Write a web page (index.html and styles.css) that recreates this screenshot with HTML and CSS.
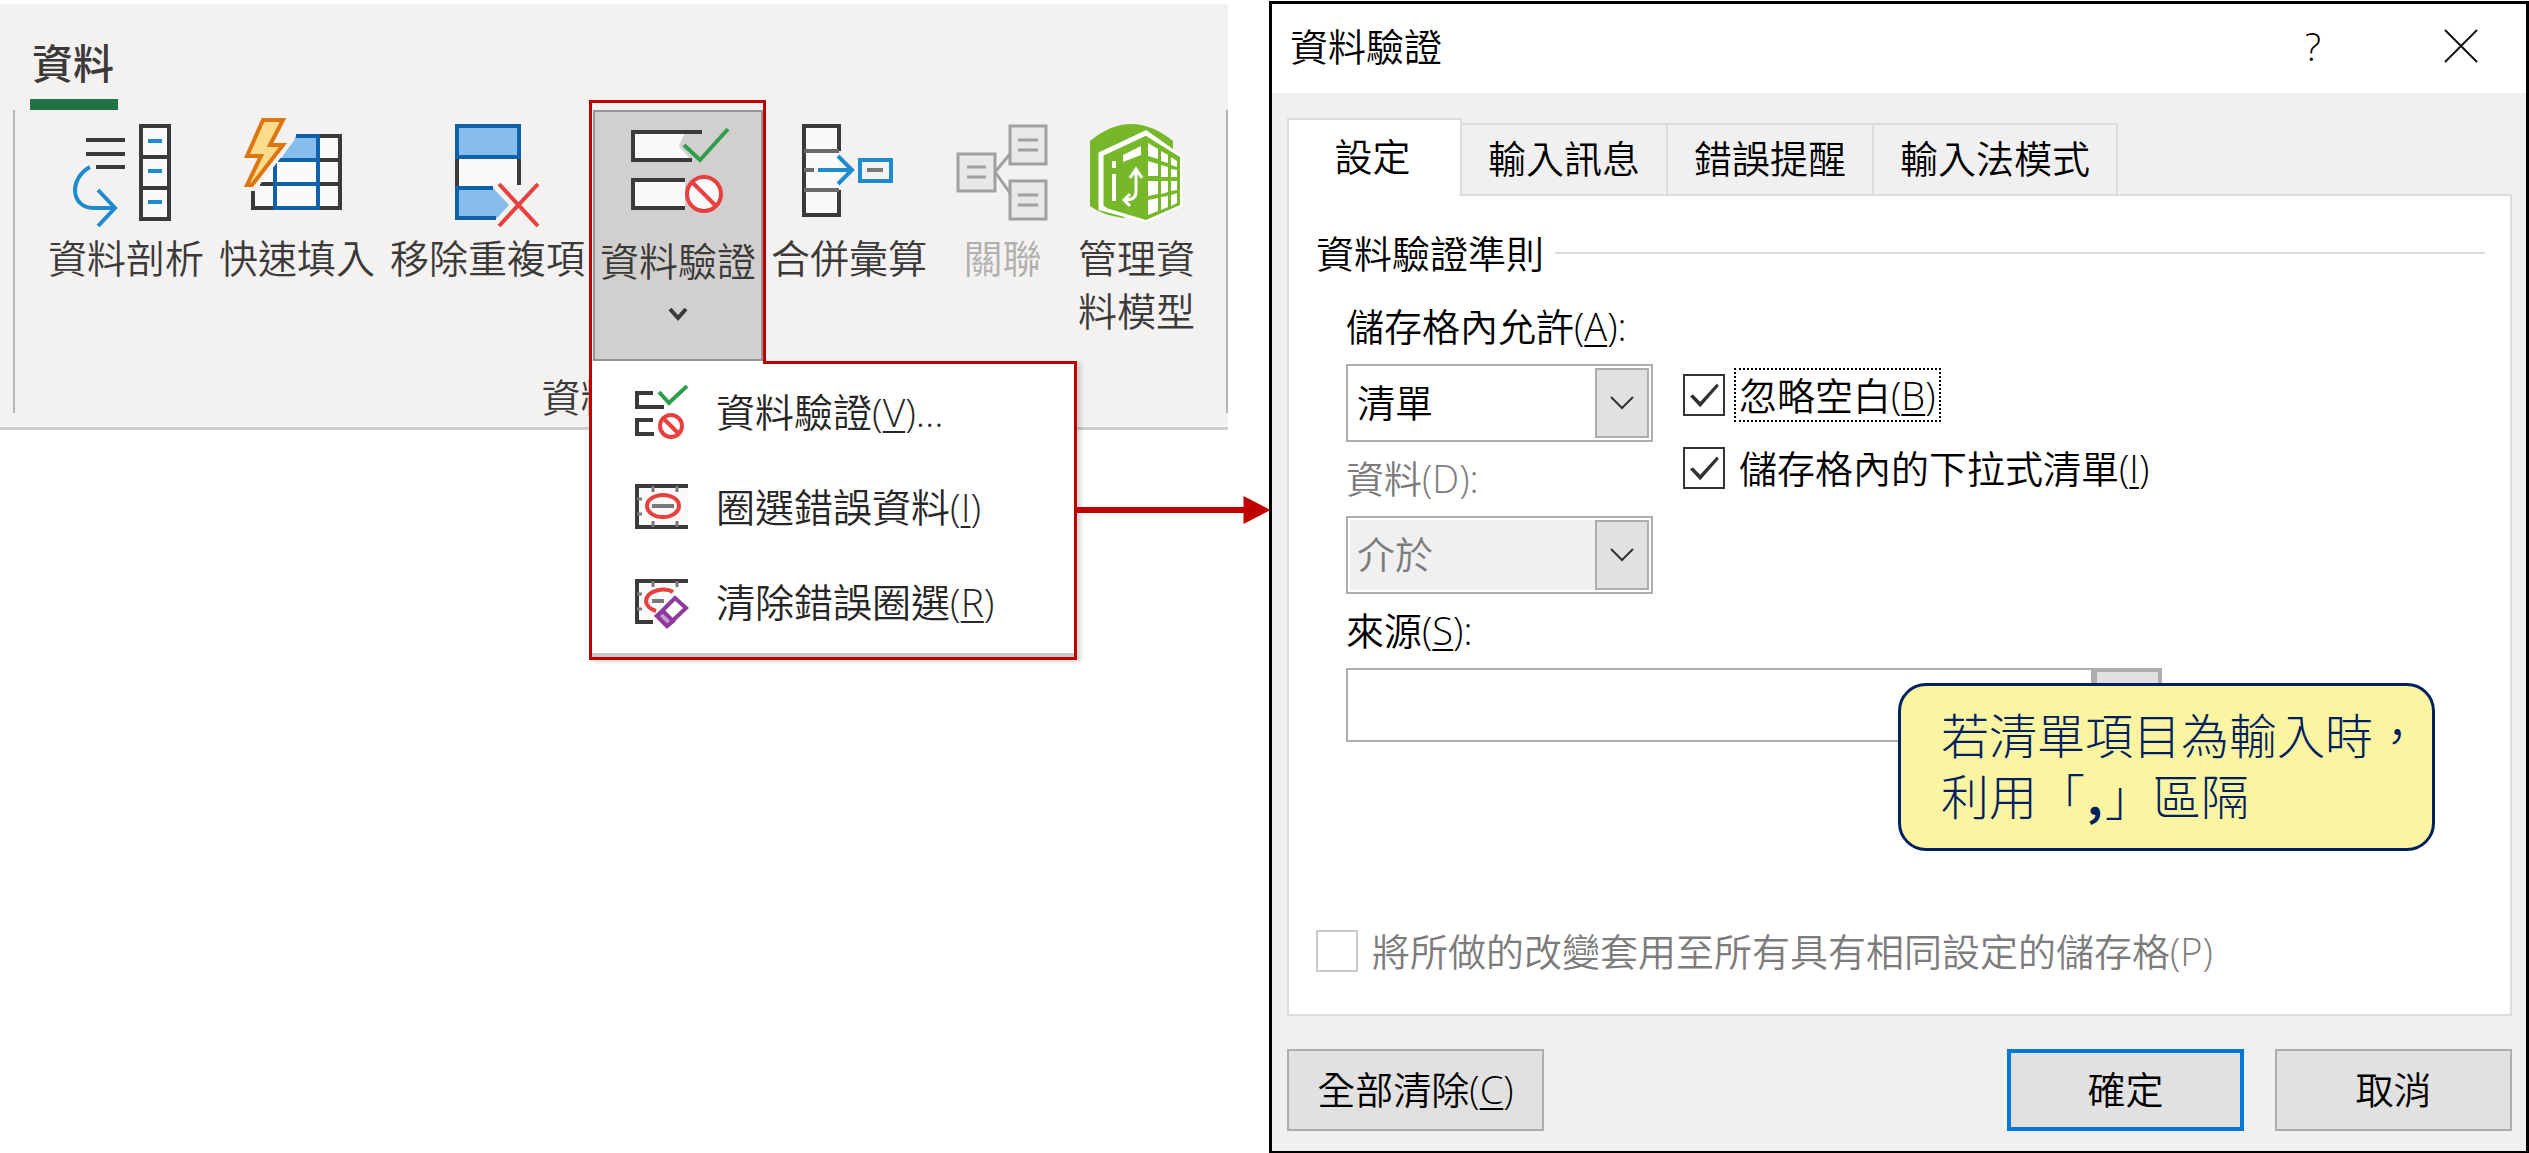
FILE: index.html
```html
<!DOCTYPE html>
<html lang="zh-Hant">
<head>
  <meta charset="UTF-8">
  <meta name="viewport" content="width=device-width, initial-scale=1.0">
  <title>資料驗證</title>
  <link rel="stylesheet" href="styles.css">
</head>
<body>
  <main class="page">
    <section class="ribbon">
      <button type="button" class="ribbon-tab">資料</button>

      <div class="group">
        <div class="tools">
          <button type="button" class="tool">
            <svg class="tool-icon" viewBox="0 0 110 110" fill="none" stroke="#3b3a39" stroke-width="4">
              <path d="M15 23H54M15 37H54M25 50H54"/>
              <path d="M70 9H98V102H70ZM70 40H98M70 71H98" fill="#fafafa"/>
              <g stroke="#1e8bcd">
                <path d="M77 24H91M77 54H91M77 85H91"/>
                <path d="M19 50C8 56 4 66 4 73C4 84 12 91 22 91H44M27 73L44 91L27 109"/>
              </g>
            </svg>
            <span>資料剖析</span>
          </button>

          <button type="button" class="tool">
            <svg class="tool-icon" viewBox="0 0 110 110" fill="none" stroke-width="4">
              <path d="M55 18H98V91H11V66L30 50Z" fill="#fafafa"/>
              <path d="M77 19H98V91H11V72M77 43H98M77 67H98M18 67H32" stroke="#3b3a39"/>
              <path d="M54 19H76V43H38Z" fill="#86bdea"/>
              <path d="M54 19H76V91H33V46M36 43H76M33 67H76" stroke="#0f61ab"/>
              <path d="M21 3H42L27 28H41L10 68H5L19 39H5Z" fill="#fbdc8c" stroke="#f3f2f1" stroke-width="12"/>
              <path d="M21 3H41L28 28H41L10 68H5L19 39H5Z" fill="#fbdc8c" stroke="#dd7510"/>
            </svg>
            <span>快速填入</span>
          </button>

          <button type="button" class="tool">
            <svg class="tool-icon" viewBox="0 0 110 110" fill="none" stroke-width="4">
              <path d="M24 40H86V69H24Z" fill="#fafafa"/>
              <path d="M24 40V71M86 40V68" stroke="#3b3a39"/>
              <path d="M24 9H86V40H24Z" fill="#86bdea" stroke="#0f61ab"/>
              <path d="M24 71H60L76 88L64 101H24Z" fill="#86bdea"/>
              <path d="M60 71H24V101H63" stroke="#0f61ab"/>
              <path d="M66 67L105 109M105 67L66 109" stroke="#f3f2f1" stroke-width="10"/>
              <path d="M66 67L105 109M105 67L66 109" stroke="#e8403f"/>
            </svg>
            <span>移除重複項</span>
          </button>

          <div class="dropdown">
            <button type="button" class="tool tool-open" aria-haspopup="true" aria-expanded="true">
              <svg class="tool-icon" viewBox="0 0 110 110" fill="none" stroke-width="4">
                <path d="M10 12H62L56 26L68 40H10ZM10 60H62V88H10Z" fill="#fafafa"/>
                <path d="M79 12H10V40H69M62 60H10V88H62" stroke="#3b3a39"/>
                <path d="M61 25L77 40L105 9" stroke="#2f9e4a"/>
                <circle cx="81" cy="74" r="17" fill="#fafafa" stroke="#e8403f"/>
                <path d="M69 62L93 86" stroke="#e8403f"/>
              </svg>
              <span>資料驗證</span>
              <svg class="chevron" viewBox="0 0 20 14" fill="none" stroke="#3b3a39" stroke-width="4">
                <path d="M2 2L10 11L18 2"/>
              </svg>
            </button>

            <div class="menu" role="menu">
              <button type="button" class="menu-item" role="menuitem">
                <svg class="menu-icon" viewBox="0 0 54 54" fill="none" stroke-width="4">
                  <path d="M18 8H2V22H29M18 35H2V49H19" stroke="#3b3a39"/>
                  <path d="M24 7L34 18L52 1" stroke="#2f9e4a"/>
                  <circle cx="36" cy="41" r="11" stroke="#e8403f"/>
                  <path d="M28 33L44 49" stroke="#e8403f"/>
                </svg>
                <span>資料驗證(<u>V</u>)...</span>
              </button>
              <button type="button" class="menu-item" role="menuitem">
                <svg class="menu-icon" viewBox="0 0 54 54" fill="none" stroke-width="4">
                  <path d="M53 6H2V47H53" fill="#fafafa" stroke="#3b3a39"/>
                  <path d="M18 6V12M42 6V12M18 41V47M42 41V47M2 19H7M2 34H7" stroke="#7a7978" stroke-width="3"/>
                  <ellipse cx="28" cy="26" rx="16" ry="11" fill="#fafafa" stroke="#e8403f"/>
                  <path d="M17 26H39" stroke="#7a7978"/>
                </svg>
                <span>圈選錯誤資料(<u>I</u>)</span>
              </button>
              <button type="button" class="menu-item" role="menuitem">
                <svg class="menu-icon" viewBox="0 0 54 54" fill="none" stroke-width="4">
                  <path d="M53 6H2V47H18" fill="#fafafa" stroke="#3b3a39"/>
                  <path d="M18 6V12M42 6V12M2 19H7M2 34H7" stroke="#7a7978" stroke-width="3"/>
                  <path d="M38 17C30 12 12 15 11 26C11 30 15 34 21 36" stroke="#e8403f"/>
                  <path d="M17 26H29" stroke="#7a7978"/>
                  <path d="M40 23L51 33L32 51L22 41Z" fill="#fff" stroke="#8e3a9d"/>
                  <path d="M28 36L38 46L32 51L22 41Z" fill="#c79bd0" stroke="#8e3a9d"/>
                </svg>
                <span>清除錯誤圈選(<u>R</u>)</span>
              </button>
              <svg class="arrow" viewBox="0 0 195 28" fill="#c00000">
                <path d="M0 11H168V0L195 14L168 28V17H0Z"/>
              </svg>
            </div>
          </div>

          <button type="button" class="tool">
            <svg class="tool-icon" viewBox="0 0 110 110" fill="none" stroke-width="4">
              <path d="M10 9H45V98H10Z" fill="#fafafa"/>
              <path d="M45 34V9H10V98H45V73" stroke="#3b3a39"/>
              <path d="M10 34H45M10 73H45M10 53H20" stroke="#6b6a69"/>
              <path d="M24 53H58M44 39L58 53L44 67M66 43H97V64H66Z" stroke="#1e8bcd"/>
              <path d="M73 53H89" stroke="#7a7978"/>
            </svg>
            <span>合併彙算</span>
          </button>

          <button type="button" class="tool tool-wide" disabled>
            <svg class="tool-icon" viewBox="0 0 110 110" fill="#e8e8e8" stroke="#a0a0a0" stroke-width="3">
              <path d="M47 55L62 37M47 55L62 76"/>
              <path d="M10 37H47V74H10ZM62 9H98V47H62ZM62 64H98V102H62Z"/>
              <path d="M19 50H38M19 60H38M70 23H90M70 33H90M70 78H90M70 88H90"/>
            </svg>
            <span>關聯</span>
          </button>

          <button type="button" class="tool">
            <svg class="tool-icon" viewBox="0 0 110 110" fill="#76b82a">
              <path d="M8 24Q49 -10 91 24V80L41 101Q20 98 8 89Z"/>
              <path d="M64 16L98 40V88L64 103L19 91V37Z" stroke="#fff" stroke-width="5"/>
              <path d="M64 19L98 40V88L64 103L24 91V39Z"/>
              <g fill="#fff">
                <path d="M66 26L76 32V42L66 39ZM79 34L86 38V46L79 44ZM89 40L95 44V50L89 48Z"/>
                <path d="M66 44L76 47V59H66ZM79 48L86 50V60H79ZM89 52L95 53V60H89Z"/>
                <path d="M66 64H76V77L66 79ZM79 64H86V75L79 77ZM89 64H95V73L89 74Z"/>
                <path d="M66 83L76 81V94L66 98ZM79 80L86 79V90L79 93ZM89 78L95 76V86L89 89Z"/>
                <path d="M41 38L59 29V38L41 45Z"/>
                <path d="M30 44H34V51H30ZM30 57H34V84H30Z"/>
              </g>
              <path d="M48 61L54 52L60 61M54 54V75Q54 83 43 83M48 77L42 83L48 89" fill="none" stroke="#fff" stroke-width="3"/>
            </svg>
            <span>管理資<br>料模型</span>
          </button>
        </div>
        <div class="group-name">資料工具</div>
      </div>
    </section>

    <form class="dialog">
      <header class="titlebar">
        <h1>資料驗證</h1>
        <button type="button" class="title-button" aria-label="說明">?</button>
        <button type="button" class="title-button" aria-label="關閉">
          <svg class="close" viewBox="0 0 34 34" fill="none" stroke="#111" stroke-width="2">
            <path d="M1 1L33 33M33 1L1 33"/>
          </svg>
        </button>
      </header>

      <div class="dialog-body">
        <div class="tabs" role="tablist">
          <button type="button" class="tab active" role="tab" aria-selected="true">設定</button>
          <button type="button" class="tab" role="tab">輸入訊息</button>
          <button type="button" class="tab" role="tab">錯誤提醒</button>
          <button type="button" class="tab" role="tab">輸入法模式</button>
        </div>

        <div class="panel">
          <h2 class="legend">資料驗證準則</h2>

          <div class="criteria">
            <div class="fields">
              <label for="allow">儲存格內允許(<u>A</u>):</label>
              <div class="combo">
                <select id="allow">
                  <option>清單</option>
                </select>
                <span class="combo-button">
                  <svg viewBox="0 0 24 16" fill="none" stroke="#333" stroke-width="2"><path d="M1 2L12 13L23 2"/></svg>
                </span>
              </div>
              <label for="data" class="off">資料(D):</label>
              <div class="combo">
                <select id="data" disabled>
                  <option>介於</option>
                </select>
                <span class="combo-button">
                  <svg viewBox="0 0 24 16" fill="none" stroke="#333" stroke-width="2"><path d="M1 2L12 13L23 2"/></svg>
                </span>
              </div>
            </div>

            <div class="checks">
              <div class="check">
                <input type="checkbox" id="blank" checked>
                <label for="blank" class="focused">忽略空白(<u>B</u>)</label>
              </div>
              <div class="check">
                <input type="checkbox" id="incell" checked>
                <label for="incell">儲存格內的下拉式清單(<u>I</u>)</label>
              </div>
            </div>
          </div>

          <div class="source">
            <label for="source">來源(<u>S</u>):</label>
            <div class="source-field">
              <input type="text" id="source">
              <button type="button" class="picker" aria-label="選取範圍"></button>
              <div class="callout">若清單項目為輸入時，<br>利用「<b>,</b>」區隔</div>
            </div>
          </div>

          <div class="check apply">
            <input type="checkbox" id="apply" disabled>
            <label for="apply">將所做的改變套用至所有具有相同設定的儲存格(P)</label>
          </div>
        </div>

        <footer class="buttons">
          <button type="button" class="btn btn-clear">全部清除(<u>C</u>)</button>
          <button type="submit" class="btn btn-ok">確定</button>
          <button type="button" class="btn">取消</button>
        </footer>
      </div>
    </form>
  </main>
</body>
</html>
```

FILE: styles.css
```css
* {
  box-sizing: border-box;
}
body {
  margin: 0;
  background: #fff;
  color: #000;
  font-family: "Open Sans", "Noto Sans CJK TC", sans-serif;
  font-size: 38px;
  font-weight: 350;
  line-height: 50px;
}
button, input, select {
  font: inherit;
  color: inherit;
  margin: 0;
  border-radius: 0;
}
h1, h2 {
  margin: 0;
  font-size: 38px;
  font-weight: inherit;
}
u {
  text-decoration-thickness: 2px;
  text-underline-offset: 4px;
}
.page {
  display: grid;
  grid-template-columns: 1228fr 1260fr;
  gap: 41px;
  align-items: start;
}

/* ribbon */
.ribbon {
  margin-top: 4px;
  padding: 23px 0 14px;
  background: #f3f2f1;
  border-bottom: 3px solid #cfcecd;
  color: #3b3a39;
}
.ribbon-tab {
  display: block;
  margin-left: 30px;
  padding: 0 4px 0 2px;
  border: 0;
  border-bottom: 11px solid #217346;
  background: none;
  font-size: 41px;
  font-weight: 500;
  line-height: 72px;
}
.group {
  margin-left: 13px;
  padding-left: 26px;
  border: solid #b5b4b3;
  border-width: 0 2px;
}
.tools {
  display: flex;
  align-items: flex-start;
  gap: 1px;
}
.tool {
  display: flex;
  flex-direction: column;
  align-items: center;
  padding: 7px 7px 0;
  border: 0;
  background: none;
  font-size: 39px;
  line-height: 53px;
  white-space: nowrap;
}
.tool:disabled {
  color: #b1b0af;
}
.tool-icon {
  width: 110px;
  height: 110px;
  margin-bottom: 4px;
}
.tool-wide {
  width: 135px;
}
.tool-open {
  width: 170px;
  height: 251px;
  padding: 8px 5px 0;
  border: 2px solid #979593;
  background: #d2d0ce;
}
.chevron {
  width: 20px;
  height: 14px;
  margin-top: 20px;
}
.group-name {
  margin: 20px 28px 0 0;
  font-size: 39px;
  line-height: 32px;
  text-align: center;
}

/* open menu with its red frame */
.dropdown {
  position: relative;
}
.dropdown::before {
  content: "";
  position: absolute;
  top: -10px;
  right: -3px;
  bottom: 0;
  left: -4px;
  border: 3px solid #c00000;
  border-bottom: 0;
  pointer-events: none;
}
.menu {
  position: absolute;
  top: 100%;
  left: -4px;
  width: 488px;
  padding: 3px 0 8px;
  background: #fff;
  border: 3px solid #c00000;
  border-top: 0;
  box-shadow: inset 0 -4px #c8c8c8, 4px 2px 4px rgba(0, 0, 0, 0.15);
  color: #262626;
}
.menu::before {
  content: "";
  position: absolute;
  top: 0;
  right: 0;
  left: 171px;
  height: 3px;
  background: #c00000;
}
.menu-item {
  display: flex;
  align-items: center;
  gap: 27px;
  width: 100%;
  height: 95px;
  padding: 0 43px;
  border: 0;
  background: none;
  font-size: 39px;
  white-space: nowrap;
}
.menu-icon {
  flex: none;
  width: 54px;
  height: 54px;
}
.arrow {
  position: absolute;
  top: 135px;
  left: 100%;
  z-index: 1;
  width: 198px;
  height: 28px;
}

/* dialog */
.dialog {
  margin-top: 1px;
  border: 3px solid #000;
  background: #f0f0f0;
}
.titlebar {
  display: flex;
  align-items: center;
  height: 89px;
  padding: 0 35px 6px 18px;
  background: #fff;
}
.titlebar h1 {
  flex: 1;
}
.title-button {
  display: flex;
  align-items: center;
  justify-content: center;
  width: 94px;
  padding: 0;
  border: 0;
  background: none;
}
.title-button + .title-button {
  width: 60px;
  margin-left: 71px;
}
.close {
  width: 34px;
  height: 34px;
}
.dialog-body {
  padding: 25px 14px 20px 15px;
}
.tabs {
  position: relative;
  display: flex;
  align-items: flex-end;
}
.tab {
  height: 73px;
  margin-bottom: -2px;
  margin-left: -2px;
  padding: 0 26px 4px;
  border: 2px solid #dcdcdc;
  background: #f0f0f0;
}
.tab.active {
  width: 175px;
  height: 78px;
  margin-left: 0;
  padding-right: 30px;
  border-bottom: 0;
  background: #fff;
}
.panel {
  padding: 32px 25px 36px 27px;
  border: 2px solid #dcdcdc;
  background: #fff;
}
.legend {
  display: flex;
  align-items: center;
  gap: 11px;
}
.legend::after {
  content: "";
  flex: 1;
  height: 2px;
  background: #dcdcdc;
}
.criteria {
  display: flex;
  gap: 30px;
  margin-top: 23px;
  padding-left: 30px;
}
.fields {
  width: 307px;
}
.fields > label, .source > label {
  display: block;
  margin-bottom: 13px;
  white-space: nowrap;
}
.off {
  color: #7c7c7c;
}
.combo {
  position: relative;
  margin-bottom: 11px;
}
.combo select {
  display: block;
  width: 100%;
  height: 78px;
  padding: 0 9px 2px;
  border: 2px solid #adadad;
  background: #fff;
  appearance: none;
}
.combo select:disabled {
  background: #f0f0f0;
  box-shadow: inset 0 0 0 2px #fff;
  color: #7c7c7c;
  opacity: 1;
}
.combo-button {
  position: absolute;
  top: 4px;
  right: 4px;
  bottom: 4px;
  display: flex;
  align-items: center;
  justify-content: center;
  width: 54px;
  border: 2px solid #adadad;
  background: #e1e1e1;
  pointer-events: none;
}
.combo-button svg {
  width: 24px;
  height: 16px;
}
.checks {
  display: flex;
  flex-direction: column;
  gap: 19px;
  padding-top: 67px;
}
.check {
  display: flex;
  align-items: center;
  gap: 9px;
}
.check input {
  flex: none;
  width: 42px;
  height: 42px;
  border: 2px solid #333;
  background: #fff;
  appearance: none;
}
.check input:checked::before {
  content: "";
  display: block;
  width: 38px;
  height: 38px;
  background: #333;
  clip-path: polygon(13% 53%, 21% 49%, 40% 68%, 84% 20%, 89% 26%, 40% 82%);
}
.check label {
  padding: 0 3px;
  border: 2px solid transparent;
  white-space: nowrap;
}
.check label.focused {
  border: 2px dotted #000;
}
.source {
  padding-left: 30px;
}
.source-field {
  position: relative;
  display: flex;
  width: 816px;
  height: 74px;
}
.source-field input {
  flex: 1;
  min-width: 0;
  padding: 0 9px;
  border: 2px solid #adadad;
  background: #fff;
}
.picker {
  width: 69px;
  padding: 0;
  border: 4px solid #adadad;
  background: #e1e1e1;
}
.callout {
  position: absolute;
  top: 15px;
  left: 552px;
  width: 537px;
  height: 168px;
  padding: 21px 0 0 40px;
  border: 3px solid #002060;
  border-radius: 28px;
  background: #fbf5a2;
  color: #002060;
  font-size: 48px;
  font-weight: 300;
  line-height: 58px;
  white-space: nowrap;
}
.callout b {
  padding: 0 2px;
  font-family: "Noto Sans CJK TC", sans-serif;
  font-weight: 700;
}
.apply {
  margin-top: 182px;
  color: #7c7c7c;
}
.apply input {
  border-color: #ccc;
}
.buttons {
  display: flex;
  gap: 31px;
  margin-top: 33px;
}
.btn {
  width: 237px;
  height: 82px;
  padding: 0 0 2px;
  border: 2px solid #adadad;
  background: #e1e1e1;
}
.btn-clear {
  width: 257px;
  margin-right: auto;
}
.btn-ok {
  border: 4px solid #0078d7;
}
```
